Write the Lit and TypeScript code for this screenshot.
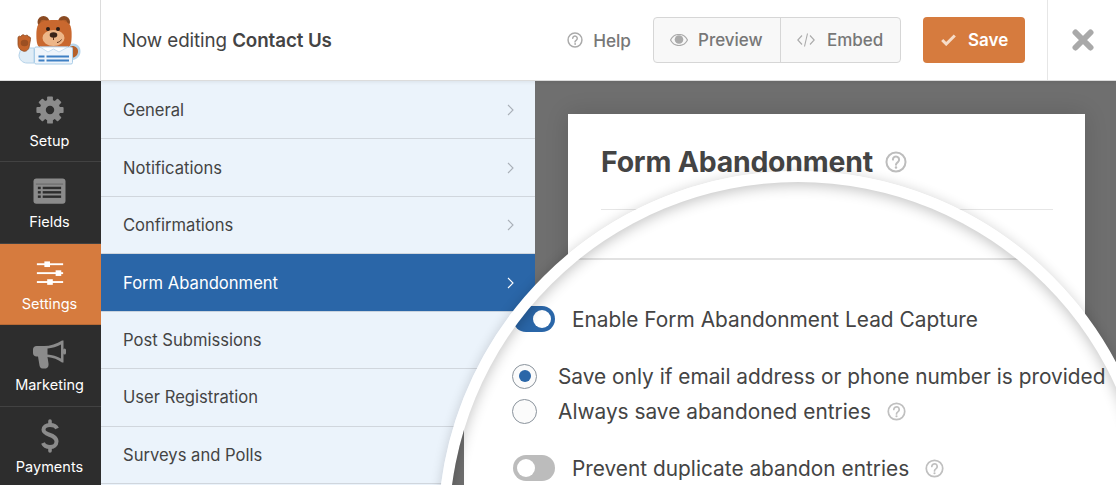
import { LitElement, html, css, svg } from "lit";
import { customElement } from "lit/decorators.js";

const q = (cls: string) => html`<svg class="q ${cls}" viewBox="0 0 24 24" fill="none" stroke="currentColor" stroke-width="2.2" stroke-linecap="round">
  <circle cx="12" cy="12" r="10.4"></circle>
  <path d="M8.6 9.4a3.4 3.4 0 1 1 5.4 2.8c-1.300.9-2 1.500-2 2.900"></path>
  <circle cx="12" cy="18" r=".7" stroke-width="1.400"></circle>
</svg>`;

const teeth = [0, 45, 90, 135, 180, 225, 270, 315].map(
  (a) => svg`<rect x="12.9" y="1.500" width="6.200" height="7" rx="1" transform="rotate(${a} 16 16)"></rect>`
);

const icons: Record<string, unknown> = {
  setup: html`<svg class="ic" viewBox="0 0 32 32" fill="#8b8b8b">
    ${teeth}
    <path fill-rule="evenodd" d="M16 5a11 11 0 1 0 0 22a11 11 0 0 0 0-22zm0 6.500a4.500 4.500 0 1 1 0 9a4.500 4.500 0 0 1 0-9z"></path>
  </svg>`,
  fields: html`<svg class="ic" viewBox="0 0 34 28">
    <rect x=".5" y=".5" width="33" height="26" rx="3" fill="#8b8b8b"></rect>
    <g fill="#2d2d2d">
      <rect x="3" y="5.500" width="28" height="1.600" opacity=".25"></rect>
      <rect x="5" y="9" width="3" height="2.500"></rect><rect x="10" y="9" width="19" height="2.500"></rect>
      <rect x="5" y="13.500" width="3" height="2.500"></rect><rect x="10" y="13.500" width="19" height="2.500"></rect>
      <rect x="5" y="18" width="3" height="2.500"></rect><rect x="10" y="18" width="19" height="2.500"></rect>
    </g>
  </svg>`,
  settings: html`<svg class="ic" viewBox="0 0 32 28" fill="#fff">
    <rect x="2" y="3.500" width="28" height="2"></rect><rect x="10" y="1.500" width="6" height="6"></rect>
    <rect x="2" y="13" width="28" height="2"></rect><rect x="22" y="11" width="6" height="6"></rect>
    <rect x="2" y="22.500" width="28" height="2"></rect><rect x="13" y="20.500" width="6" height="6"></rect>
  </svg>`,
  marketing: html`<svg class="ic" viewBox="0 0 33 29" fill="#8b8b8b">
    <path fill-rule="evenodd" d="M3.500 6H11C17 6 24 4 29 .5H30.500V22.500H29C25 19.500 20 17.500 14.500 17L15.500 23.500C15.800 26 15 28.500 12 28.500H9.500C7.500 28.500 6.800 27 6.500 25.500L5 16.500H3.500C1.500 16.500 0 15 0 13V9.500C0 7.500 1.500 6 3.500 6ZM14.500 8.500V14.500C19 14.900 24 16.300 28 18.500V4.500C24 6.800 19 8.200 14.500 8.500Z"></path>
    <rect x="30" y="8.500" width="3" height="6" rx="1.500"></rect>
  </svg>`,
  payments: html`<svg class="ic" viewBox="0 0 18 34" fill="none" stroke="#8b8b8b">
    <path stroke-width="4" d="M16 9.500C15 7 12.500 6 9 6C5 6 2.500 8 2.500 10.800C2.500 17 15.500 14.500 15.500 22.500C15.500 26 12.500 28 9 28C5.500 28 3 26.500 2 24"></path>
    <path stroke-width="3.600" stroke-linecap="round" d="M9 2v4M9 28v4"></path>
  </svg>`,
};

const side = [
  { id: "setup", label: "Setup", w: 30, h: 30 },
  { id: "fields", label: "Fields", w: 33, h: 27 },
  { id: "settings", label: "Settings", w: 30, h: 26 },
  { id: "marketing", label: "Marketing", w: 33, h: 29 },
  { id: "payments", label: "Payments", w: 18, h: 34 },
];

const rows = ["General", "Notifications", "Confirmations", "Form Abandonment", "Post Submissions", "User Registration", "Surveys and Polls"];

@customElement("app-root")
export class AppRoot extends LitElement {
  static styles = css`
    :host { display: block; position: relative; width: 1116px; height: 485px; overflow: hidden;
      font-family: Inter, "Liberation Sans", sans-serif; background: #fff; color: #444; -webkit-font-smoothing: antialiased; }
    .top { display: flex; align-items: center; height: 81px; box-sizing: border-box; border-bottom: 1px solid #dcdcdc; box-shadow: 0 1px 4px rgba(0,0,0,.08); position: relative; z-index: 1; background: #fff; }
    .logo { width: 101px; height: 80px; box-sizing: border-box; border-right: 1px solid #dcdcdc; flex: none; }
    .logo svg { display: block; width: 100px; height: 81px; }
    .now { margin-left: 21px; font-size: 18.800px; letter-spacing: -.1px; color: #444; flex: 1; }
    .now b { font-weight: 600; }
    .help { display: flex; align-items: center; gap: 10px; color: #777; font-size: 17.200px; font-weight: 500; margin-right: 22px; }
    .help .q { width: 16px; height: 16px; color: #aaa; }
    .group { display: flex; height: 46px; box-sizing: border-box; width: 248px; border: 1px solid #d6d6d6; border-radius: 4px; background: #f8f8f8; color: #777; font-size: 17px; font-weight: 500; margin-right: 22px; }
    .group div { display: flex; align-items: center; }
    .g1 { width: 127px; padding-left: 16px; gap: 10px; box-sizing: border-box; border-right: 1px solid #d6d6d6; }
    .g2 { padding-left: 16px; gap: 12px; }
    .save { display: flex; align-items: center; gap: 12px; width: 102px; height: 46px; box-sizing: border-box; padding-left: 18px; background: #d67b3e; color: #fff; border-radius: 4px; font-size: 17px; font-weight: 600; margin-right: 22px; }
    .close { width: 69px; height: 80px; flex: none; box-sizing: border-box; border-left: 1px solid #e6e6e6; padding-left: 2px; display: flex; align-items: center; justify-content: center; }
    .main { display: flex; height: 404px; }
    .side { width: 101px; flex: none; background: #2d2d2d; overflow: hidden; }
    .si { height: 81.400px; box-sizing: border-box; border-bottom: 1px solid #424242; display: flex; flex-direction: column; align-items: center; color: #fff; font-size: 14.500px; padding-right: 2px; }
    .si.on { background: #d67b3e; border-bottom-color: #b86a35; }
    .si .box { height: 48px; display: flex; align-items: center; justify-content: center; padding-top: 10px; box-sizing: border-box; }
    .si span { line-height: 18px; margin-top: 3px; }
    .ic { display: block; }
    .panel { width: 434px; flex: none; box-sizing: border-box; padding-top: 1px; background: #ebf3fb; overflow: hidden; }
    .row { height: 57.450px; box-sizing: border-box; border-bottom: 1px solid #d0d6dd; padding: 0 21px 0 22px; display: flex; align-items: center; justify-content: space-between; font-size: 16.600px; color: #444; }
    .row.on { background: #2a66a8; color: #fff; border-bottom-color: #c9d3de; }
    .row svg { width: 7px; height: 12px; stroke: #a9b0b8; }
    .row.on svg { stroke: #fff; }
    .preview { flex: 1; background: #6f6f6f; padding: 33px 31px 0 33px; display: flex; }
    .card { flex: 1; background: #fff; box-shadow: 0 0 22px rgba(0,0,0,.14); padding: 0 32px 0 33px; }
    .card h1 { margin: 0; padding-top: 31px; height: 64px; box-sizing: content-box; display: flex; align-items: flex-start; gap: 12px; font-size: 28.400px; line-height: 34px; font-weight: 700; color: #444; letter-spacing: -.2px; border-bottom: 1px solid #e6e6e6; }
    .card h1 .q { width: 22px; height: 22px; margin-top: 6px; color: #bdbdbd; }
    .lens { position: absolute; left: 438px; top: 171px; width: 720px; height: 720px; box-sizing: border-box; border: 11px solid #fff; border-radius: 50%; overflow: hidden; background: #fff; display: flex; z-index: 2; }
    .halo { position: absolute; left: 438px; top: 171px; width: 720px; height: 720px; border-radius: 50%; box-shadow: 0 0 12px rgba(0,0,0,.16); z-index: 2; }
    .shade { position: absolute; left: 449px; top: 182px; width: 698px; height: 698px; border-radius: 50%; box-shadow: inset 0 3px 14px rgba(0,0,0,.24); z-index: 3; }
    .strip { width: 15px; flex: none; background: #6f6f6f; }
    .lc { flex: 1; padding-top: 76px; font-size: 20.850px; color: #444; }
    .lc hr { border: 0; height: 2px; margin: 0 0 46px; background: #e2e2e2; }
    .opt { display: flex; align-items: center; margin-left: 49px; height: 26px; }
    .tog { width: 42px; height: 26px; box-sizing: border-box; flex: none; border-radius: 13px; background: #2a66a8; display: flex; justify-content: flex-end; align-items: center; padding: 0 4px; margin-right: 17px; }
    .tog i { display: block; width: 18px; height: 18px; border-radius: 50%; background: #fff; }
    .tog.off { background: #bcbcbc; justify-content: flex-start; }
    .rad { width: 25px; height: 25px; box-sizing: border-box; flex: none; margin: 0 21px 0 -1px; border-radius: 50%; border: 1.500px solid #8a939c; background: #fbfbfb; display: flex; align-items: center; justify-content: center; }
    .rad i { display: block; width: 12px; height: 12px; border-radius: 50%; background: #2a66a8; }
    .opt .q { width: 19px; height: 19px; margin-left: 16px; color: #c0c0c0; flex: none; }
    .m1 { margin-top: 31px; }
    .m2 { margin-top: 9px; }
    .m3 { margin-top: 31px; }
    .nw { white-space: nowrap; }
  `;

  render() {
    return html`
      <div class="top">
        <div class="logo">
          <svg viewBox="0 0 100 81">
            <path d="M70 44c6-2 11 2 10.500 8c-.4 5-5 9-11 8z" fill="#b9d6ec"></path>
            <path d="M70 46.500c4.500-1.500 8.500 1.500 8 5.500c-.4 3.700-4 6.500-8 6z" fill="#b5602b"></path>
            <path d="M21 48l13-0v15h-7c-4 0-8-3-8-8z" fill="#dfecf6" stroke="#b4d2e9"></path>
            <path d="M18 38c0-2 2-2.500 3-1c0-2.500 3-3 4-1c1-1.500 3.500-1 3.500 1c1-.5 2.500.2 2 2.500l-1.500 8c-1 3-3.500 4.500-6 3.500c-3-1-4.800-3.500-5-6.500z" fill="#c4642b" stroke="#8e4a20" stroke-width=".8"></path>
            <ellipse cx="24.500" cy="43" rx="3.800" ry="3.300" fill="#9c4f22"></ellipse>
            <circle cx="43.500" cy="22" r="6" fill="#8a4a22"></circle>
            <circle cx="64" cy="22" r="6" fill="#8a4a22"></circle>
            <circle cx="43.500" cy="23" r="3.200" fill="#b5602b"></circle>
            <circle cx="64" cy="23" r="3.200" fill="#b5602b"></circle>
            <path d="M38 25c3-4 8-5 16-5s13 1 16 5c2 3 2 13 1 18c-1 4-4 6-6 6H43c-2 0-5-2-6-6c-1-5-1-15 1-18z" fill="#c9682f"></path>
            <ellipse cx="53.500" cy="38" rx="11" ry="8" fill="#edb688"></ellipse>
            <circle cx="48" cy="29" r="2" fill="#2a1c16"></circle>
            <circle cx="58" cy="29" r="2" fill="#2a1c16"></circle>
            <ellipse cx="53.500" cy="35" rx="3.800" ry="2.800" fill="#3a2418"></ellipse>
            <path d="M53.500 37v3M57 42.500c2-.3 3.500-1.300 4.500-3" stroke="#5b3019" stroke-width="1" fill="none"></path>
            <rect x="34.500" y="47" width="38" height="17" rx="1.500" fill="#eff5fb" stroke="#a9cde8"></rect>
            <path d="M40 47l8 5l5.500-3l5.500 3l9-5z" fill="#fff" stroke="#bdd7ec" stroke-width=".8"></path>
            <g fill="#3f80c4">
              <rect x="38.500" y="55.500" width="6" height="2"></rect><rect x="46.500" y="55.500" width="22.500" height="2"></rect>
              <rect x="38.500" y="59.500" width="6" height="2"></rect><rect x="46.500" y="59.500" width="22.500" height="2"></rect>
            </g>
          </svg>
        </div>
        <div class="now">Now editing <b>Contact Us</b></div>
        <div class="help">${q("")}Help</div>
        <div class="group">
          <div class="g1">
            <svg width="18" height="12" viewBox="0 0 18 12"><path d="M9 .5C5 .5 2 3 .5 6C2 9 5 11.500 9 11.500S16 9 17.500 6C16 3 13 .5 9 .5z" fill="none" stroke="#aaa" stroke-width="1.200"></path><circle cx="9" cy="5.500" r="4.300" fill="#aaa"></circle></svg>
            Preview
          </div>
          <div class="g2">
            <svg width="18" height="14" viewBox="0 0 18 14" fill="none" stroke="#aaa" stroke-width="1.100"><path d="M5 2.500L.8 7L5 11.500M13 2.500L17.200 7L13 11.500M10.500 .5L7.500 13.500"></path></svg>
            Embed
          </div>
        </div>
        <div class="save">
          <svg width="15" height="12" viewBox="0 0 15 12" fill="none" stroke="#f6dcc8" stroke-width="3"><path d="M1.200 6l4 4L13.800 1.500"></path></svg>
          Save
        </div>
        <div class="close">
          <svg width="22" height="22" viewBox="0 0 22 22" stroke="#a9a9a9" stroke-width="6" stroke-linecap="round"><path d="M3.500 3.500l15 15M18.500 3.500l-15 15"></path></svg>
        </div>
      </div>
      <div class="main">
        <div class="side">
          ${side.map((s) => html`
            <div class="si ${s.id === "settings" ? "on" : ""}">
              <div class="box"><div style="width:${s.w}px;height:${s.h}px">${icons[s.id]}</div></div>
              <span>${s.label}</span>
            </div>`)}
        </div>
        <div class="panel">
          ${rows.map((r) => html`
            <div class="row ${r === "Form Abandonment" ? "on" : ""}">
              <span>${r}</span>
              <svg viewBox="0 0 7 12" fill="none" stroke-width="1.100"><path d="M1 1l5 5l-5 5"></path></svg>
            </div>`)}
        </div>
        <div class="preview">
          <div class="card">
            <h1>Form Abandonment ${q("")}</h1>
          </div>
        </div>
      </div>
      <div class="halo"></div>
      <div class="lens">
        <div class="strip"></div>
        <div class="lc">
          <hr />
          <div class="opt nw"><div class="tog"><i></i></div>Enable Form Abandonment Lead Capture</div>
          <div class="opt nw m1"><div class="rad"><i></i></div>Save only if email address or phone number is provided</div>
          <div class="opt nw m2"><div class="rad"></div>Always save abandoned entries ${q("")}</div>
          <div class="opt nw m3"><div class="tog off"><i></i></div>Prevent duplicate abandon entries ${q("")}</div>
        </div>
      </div>
      <div class="shade"></div>
    `;
  }
}
